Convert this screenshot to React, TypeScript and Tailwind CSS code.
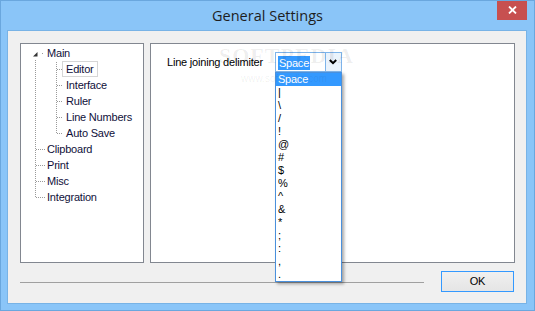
import React from "react";

const ui = { fontFamily: '"Liberation Sans", Arial, sans-serif' };

const topItems = ["Clipboard", "Print", "Misc", "Integration"];
const childItems = ["Interface", "Ruler", "Line Numbers", "Auto Save"];
const delimiters = ["Space", "|", "\\", "/", "!", "@", "#", "$", "%", "^", "&", "*", ";", ":", ",", "."];

function TreeLines() {
  // connector dots of the tree, coordinates inside the tree panel
  const dot = { stroke: "#9a9a9a", strokeWidth: 1, strokeDasharray: "1 1" };
  return (
    <svg className="absolute inset-0 pointer-events-none" width="122" height="218">
      <polygon points="12,12.5 16.5,12.5 16.5,8" fill="#333" />
      <line x1="14.5" y1="16" x2="14.5" y2="154" {...dot} />
      <line x1="35.5" y1="18" x2="35.5" y2="90" {...dot} />
      <rect x="21" y="9" width="1" height="1" fill="#9a9a9a" />
      {[25, 41, 57, 73, 89].map((y) => (
        <line key={y} x1="36" y1={y + 0.5} x2="42" y2={y + 0.5} {...dot} />
      ))}
      {[105, 121, 137, 153].map((y) => (
        <line key={y} x1="15" y1={y + 0.5} x2="25" y2={y + 0.5} {...dot} />
      ))}
    </svg>
  );
}

function Tree() {
  return (
    <div className="relative w-[124px] h-full bg-white border border-[#828790] text-[11px] tracking-[-0.2px] text-[#10103a]">
      <TreeLines />
      <div className="pt-[1px]">
        <div className="h-[16px] flex items-center pl-[26px]">Main</div>
        <div className="h-[16px] flex items-center pl-[41px]">
          <span className="h-[16px] flex items-center px-[3px] border border-[#d6d6d6]">Editor</span>
        </div>
        {childItems.map((t) => (
          <div key={t} className="h-[16px] flex items-center pl-[45px]">
            {t}
          </div>
        ))}
        {topItems.map((t) => (
          <div key={t} className="h-[16px] flex items-center pl-[26px]">
            {t}
          </div>
        ))}
      </div>
    </div>
  );
}

function Combo() {
  return (
    <div className="relative w-[67px] h-[20px]">
      <div className="flex w-full h-full bg-white border border-[#7eb4ea]">
        <div className="flex-1 pl-[2px] pt-[2px]">
          <span className="inline-flex items-center h-[14px] px-[1px] bg-[#3399ff] text-white">Space</span>
        </div>
        <div className="w-[16px] flex items-center justify-center border-l border-[#7eb4ea] bg-[#eaf3fc]">
          <svg width="8" height="6" viewBox="0 0 8 6">
            <polyline points="0.8,1 4,4.2 7.2,1" fill="none" stroke="#000" strokeWidth="2" />
          </svg>
        </div>
      </div>
      <div className="absolute left-0 top-full z-10 w-[67px] bg-white border border-[#4a90dc] shadow-[2px_2px_3px_rgba(0,0,0,0.35)]">
        {delimiters.map((d, i) => (
          <div
            key={d}
            className={
              i === 0
                ? "h-[13px] flex items-center pl-[2px] bg-[#3399ff] text-white"
                : "h-[13px] flex items-center pl-[2px] text-black"
            }
          >
            {d}
          </div>
        ))}
      </div>
    </div>
  );
}

export default function App() {
  return (
    <div
      className="relative w-[535px] h-[311px] bg-[#8ac5f8] border border-[#6aa7de] flex flex-col overflow-hidden"
      style={ui}
    >
      {/* title bar */}
      <div className="relative h-[29px] flex items-center justify-center">
        <span className="text-[14.5px] text-[#1e1e1e] pt-[1px]" style={{ fontFamily: '"Open Sans", "Noto Sans", sans-serif' }}>
          General Settings
        </span>
        <div className="absolute right-[7px] top-[-1px] w-[30px] h-[20px] bg-[#c75050] flex items-center justify-center">
          <svg width="9" height="8" viewBox="0 0 9 8">
            <path d="M1 0.5 L8 7.5 M8 0.5 L1 7.5" stroke="#fff" strokeWidth="1.8" />
          </svg>
        </div>
      </div>

      {/* client area */}
      <div className="ml-[6px] mr-[7px] h-[274px] bg-[#f0f0f0] border border-[#78b3e6] pt-[12px] pl-[12px] pr-[11px] text-[11px] tracking-[-0.2px]">
        <div className="flex h-[220px] gap-[6px]">
          <Tree />
          <div className="flex-1 bg-white border border-[#828790] pl-[16px] pt-[8px]">
            <div className="flex items-center gap-[12px] text-black">
              <span>Line joining delimiter</span>
              <Combo />
            </div>
          </div>
        </div>
        <div className="flex items-center mt-[8px] pr-[1px]">
          <div className="flex-1 h-px bg-[#a0a0a0] mt-[1px]" />
          <button className="ml-[17px] w-[73px] h-[21px] border border-[#3399ff] bg-gradient-to-b from-[#f0f0f0] to-[#e5e5e5] text-[11px] text-black">
            OK
          </button>
        </div>
      </div>

      {/* watermark */}
      <div className="absolute left-[218px] top-[44px] z-20 pointer-events-none text-[rgba(0,0,0,0.07)]" style={{ fontFamily: '"Liberation Serif", serif' }}>
        <div className="text-[22px] font-bold tracking-[1px] leading-none">SOFTPEDIA</div>
        <div className="text-[10px] ml-[22px] mt-[7px] leading-none" style={ui}>www.softpedia.com</div>
      </div>
    </div>
  );
}
